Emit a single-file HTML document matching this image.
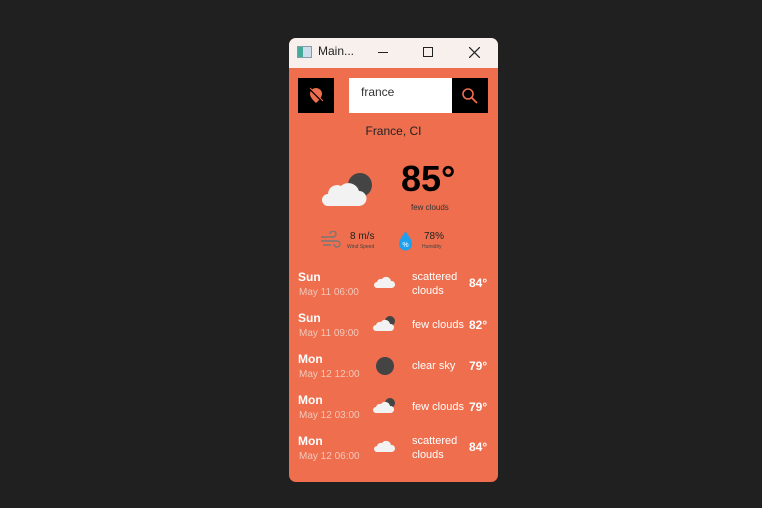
<!DOCTYPE html>
<html><head><style>
*{margin:0;padding:0;box-sizing:border-box}
body{width:762px;height:508px;background:#202020;font-family:"Segoe UI","Liberation Sans","DejaVu Sans",sans-serif;position:relative;overflow:hidden}
.win{position:absolute;left:289px;top:38px;width:209px;height:444px;background:#ee6e4d;border-radius:7px;overflow:hidden}
.tb{position:absolute;left:0;top:0;width:209px;height:30px;background:#f8f0ed}
.a{position:absolute}
.t{position:absolute;white-space:nowrap}
.day{font-weight:bold;color:#fff;font-size:12px}
.dt{color:#f3c8bb;font-size:10px}
.ds{color:#fff;font-size:11px;line-height:14px}
.tp{color:#fff;font-weight:bold;font-size:12px}
</style></head><body>
<div class="win">
 <div class="tb">
  <div class="a" style="left:8px;top:8px;width:15px;height:12px;border:1px solid #8a9aa0;background:linear-gradient(90deg,#4a9 0 40%,#cde 40%)"></div>
  <div class="t" style="left:29px;top:6px;font-size:12px;color:#222">Main...</div>
  <div class="a" style="left:89px;top:14px;width:10px;height:1px;background:#222"></div>
  <div class="a" style="left:134px;top:9px;width:10px;height:10px;border:1px solid #222"></div>
  <svg class="a" style="left:180px;top:9px" width="11" height="11"><path d="M0 0L11 11M11 0L0 11" stroke="#222" stroke-width="1.2"/></svg>
 </div>
 <div class="a" style="left:9px;top:40px;width:36px;height:35px;background:#000"></div>
 <svg class="a" style="left:19px;top:49px" width="16" height="17"><path d="M8 1a6 6 0 0 0-6 6c0 4 6 9 6 9s6-5 6-9a6 6 0 0 0-6-6z" fill="#ee6e4d"/><path d="M2 2L15 15" stroke="#000" stroke-width="2"/><path d="M2 1L15 14" stroke="#ee6e4d" stroke-width="1"/></svg>
 <div class="a" style="left:60px;top:40px;width:103px;height:35px;background:#fff"></div>
 <div class="t" style="left:72px;top:47px;font-size:12px;color:#333">france</div>
 <div class="a" style="left:163px;top:40px;width:36px;height:35px;background:#000"></div>
 <svg class="a" style="left:172px;top:49px" width="18" height="18"><circle cx="7" cy="7" r="5" fill="none" stroke="#ee6e4d" stroke-width="1.6"/><path d="M11 11L16 16" stroke="#ee6e4d" stroke-width="1.8"/></svg>
 <div class="t" style="left:0;width:209px;text-align:center;top:86px;font-size:12px;color:#222">France, CI</div>
 <svg class="a" style="left:33px;top:132px" width="52" height="40"><circle cx="38" cy="15" r="12" fill="#444"/><path d="M6 36a6 6 0 0 1 0-12a9 9 0 0 1 13-8a11 11 0 0 1 18 5a7.5 7.5 0 0 1 0 15z" fill="#f2f2f2"/></svg>
 <div class="t" style="left:112px;top:120px;font-size:36px;font-weight:bold;color:#000">85°</div>
 <div class="t" style="left:122px;top:165px;font-size:8px;color:#333">few clouds</div>
 <svg class="a" style="left:31px;top:193px" width="22" height="18"><path d="M1 6h12a3 3 0 1 0-3-3M1 10h16a3 3 0 1 1-3 3M3 14h8" fill="none" stroke="#777" stroke-width="1.4"/></svg>
 <div class="t" style="left:61px;top:193px;font-size:10px;color:#222">8 m/s</div>
 <div class="t" style="left:58px;top:206px;font-size:5px;color:#444">Wind Speed</div>
 <svg class="a" style="left:109px;top:192px" width="15" height="21"><path d="M7.5 1C5 6 1 9 1 14a6.5 6.5 0 0 0 13 0C14 9 10 6 7.5 1z" fill="#1ea0ee"/><text x="7.5" y="17" font-size="7" fill="#fff" text-anchor="middle" font-family="Liberation Sans">%</text></svg>
 <div class="t" style="left:135px;top:193px;font-size:10px;color:#222">78%</div>
 <div class="t" style="left:133px;top:206px;font-size:5px;color:#444">Humidity</div>

 <div class="t day" style="left:9px;top:232px">Sun</div><div class="t dt" style="left:10px;top:249px">May 11 06:00</div>
 <svg class="a" style="left:85px;top:237px" width="22" height="14"><path d="M3 13a3 3 0 0 1 0-6a4 4 0 0 1 5-3a5 5 0 0 1 9 2a3.5 3.5 0 0 1 1 7z" fill="#f2f2f2"/></svg>
 <div class="t ds" style="left:123px;top:232px">scattered<br>clouds</div><div class="t tp" style="left:180px;top:238px">84°</div>

 <div class="t day" style="left:9px;top:273px">Sun</div><div class="t dt" style="left:10px;top:290px">May 11 09:00</div>
 <svg class="a" style="left:84px;top:276px" width="24" height="18"><circle cx="17" cy="7" r="5" fill="#444"/><path d="M3 17a3 3 0 0 1 0-6a4 4 0 0 1 5-3a5 5 0 0 1 9 2a3.5 3.5 0 0 1 1 7z" fill="#f2f2f2"/></svg>
 <div class="t ds" style="left:123px;top:280px">few clouds</div><div class="t tp" style="left:180px;top:280px">82°</div>

 <div class="t day" style="left:9px;top:314px">Mon</div><div class="t dt" style="left:10px;top:331px">May 12 12:00</div>
 <div class="a" style="left:87px;top:319px;width:18px;height:18px;border-radius:50%;background:#444"></div>
 <div class="t ds" style="left:123px;top:321px">clear sky</div><div class="t tp" style="left:180px;top:321px">79°</div>

 <div class="t day" style="left:9px;top:355px">Mon</div><div class="t dt" style="left:10px;top:372px">May 12 03:00</div>
 <svg class="a" style="left:84px;top:358px" width="24" height="18"><circle cx="17" cy="7" r="5" fill="#444"/><path d="M3 17a3 3 0 0 1 0-6a4 4 0 0 1 5-3a5 5 0 0 1 9 2a3.5 3.5 0 0 1 1 7z" fill="#f2f2f2"/></svg>
 <div class="t ds" style="left:123px;top:362px">few clouds</div><div class="t tp" style="left:180px;top:362px">79°</div>

 <div class="t day" style="left:9px;top:396px">Mon</div><div class="t dt" style="left:10px;top:413px">May 12 06:00</div>
 <svg class="a" style="left:85px;top:401px" width="22" height="14"><path d="M3 13a3 3 0 0 1 0-6a4 4 0 0 1 5-3a5 5 0 0 1 9 2a3.5 3.5 0 0 1 1 7z" fill="#f2f2f2"/></svg>
 <div class="t ds" style="left:123px;top:396px">scattered<br>clouds</div><div class="t tp" style="left:180px;top:402px">84°</div>
</div>
</body></html>
